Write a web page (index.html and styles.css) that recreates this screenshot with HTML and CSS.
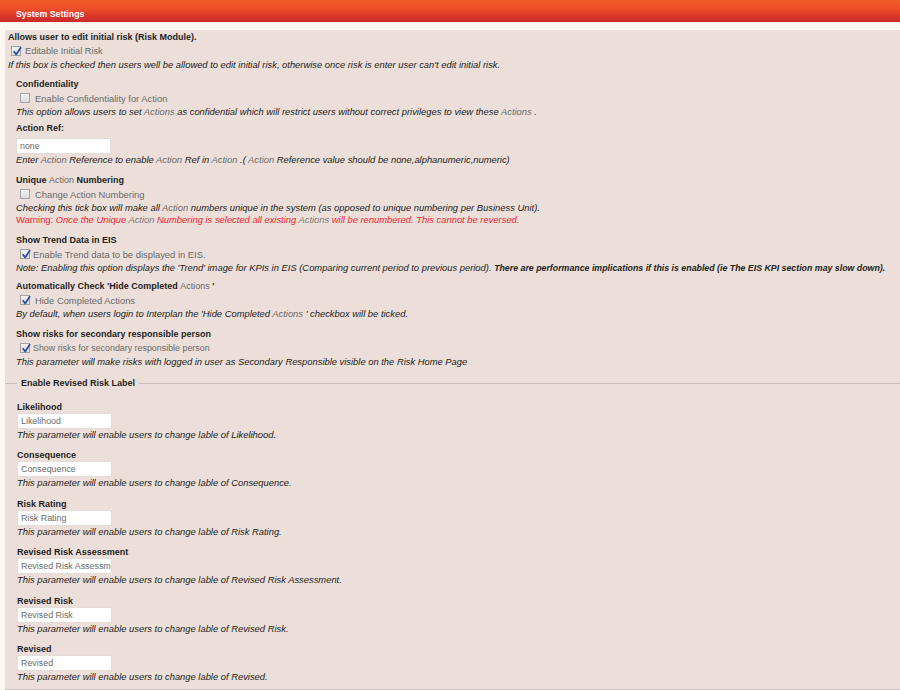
FILE: index.html
```html
<!DOCTYPE html>
<html>
<head>
<meta charset="utf-8">
<title>System Settings</title>
<link rel="stylesheet" href="styles.css">
</head>
<body>
<div class="header"><span class="title">System Settings</span></div>
<div class="panel">
  <div class="setting top">
    <div class="heading">Allows user to edit initial risk (Risk Module).</div>
    <label class="cb-row first"><span class="cb checked"><svg viewBox="0 0 10 10"><path d="M2.2 5.2 L4.2 8 L8.6 1.2"/></svg></span><span class="cb-label">Editable Initial Risk</span></label>
    <div class="desc">If this box is checked then users well be allowed to edit initial risk, otherwise once risk is enter user can't edit initial risk.</div>
  </div>

  <div class="sections">
    <div class="setting">
      <div class="heading">Confidentiality</div>
      <label class="cb-row"><span class="cb"></span><span class="cb-label">Enable Confidentiality for Action</span></label>
      <div class="desc">This option allows users to set <span class="term">Actions</span> as confidential which will restrict users without correct privileges to view these <span class="term">Actions</span> .</div>
    </div>

    <div class="setting ref">
      <div class="heading">Action Ref:</div>
      <input class="text-input" type="text" value="none">
      <div class="desc">Enter <span class="term">Action</span> Reference to enable <span class="term">Action</span> Ref in <span class="term">Action</span> .( <span class="term">Action</span> Reference value should be none,alphanumeric,numeric)</div>
    </div>

    <div class="setting">
      <div class="heading">Unique <span class="term-h">Action</span> Numbering</div>
      <label class="cb-row"><span class="cb"></span><span class="cb-label">Change Action Numbering</span></label>
      <div class="desc">Checking this tick box will make all <span class="term">Action</span> numbers unique in the system (as opposed to unique numbering per Business Unit).</div>
      <div class="warning"><span class="warn-lead">Warning:</span> Once the Unique <span class="term">Action</span> Numbering is selected all existing <span class="term">Actions</span> will be renumbered. This cannot be reversed.</div>
    </div>

    <div class="setting">
      <div class="heading">Show Trend Data in EIS</div>
      <label class="cb-row"><span class="cb checked"><svg viewBox="0 0 10 10"><path d="M2.2 5.2 L4.2 8 L8.6 1.2"/></svg></span><span class="cb-label tight">Enable Trend data to be displayed in EIS.</span></label>
      <div class="desc">Note: Enabling this option displays the 'Trend' image for KPIs in EIS (Comparing current period to previous period). <b>There are performance implications if this is enabled (ie The EIS KPI section may slow down).</b></div>
    </div>

    <div class="setting auto">
      <div class="heading">Automatically Check 'Hide Completed <span class="term-h">Actions</span> '</div>
      <label class="cb-row"><span class="cb checked"><svg viewBox="0 0 10 10"><path d="M2.2 5.2 L4.2 8 L8.6 1.2"/></svg></span><span class="cb-label">Hide Completed Actions</span></label>
      <div class="desc">By default, when users login to Interplan the 'Hide Completed <span class="term">Actions</span> ' checkbox will be ticked.</div>
    </div>

    <div class="setting">
      <div class="heading">Show risks for secondary responsible person</div>
      <label class="cb-row"><span class="cb checked"><svg viewBox="0 0 10 10"><path d="M2.2 5.2 L4.2 8 L8.6 1.2"/></svg></span><span class="cb-label small tight">Show risks for secondary responsible person</span></label>
      <div class="desc">This parameter will make risks with logged in user as Secondary Responsible visible on the Risk Home Page</div>
    </div>
  </div>

  <fieldset class="revised">
    <legend>Enable Revised Risk Label</legend>
    <div class="field">
      <div class="heading">Likelihood</div>
      <input class="text-input" type="text" value="Likelihood">
      <div class="desc">This parameter will enable users to change lable of Likelihood.</div>
    </div>
    <div class="field">
      <div class="heading">Consequence</div>
      <input class="text-input" type="text" value="Consequence">
      <div class="desc">This parameter will enable users to change lable of Consequence.</div>
    </div>
    <div class="field">
      <div class="heading">Risk Rating</div>
      <input class="text-input" type="text" value="Risk Rating">
      <div class="desc">This parameter will enable users to change lable of Risk Rating.</div>
    </div>
    <div class="field">
      <div class="heading">Revised Risk Assessment</div>
      <input class="text-input" type="text" value="Revised Risk Assessment">
      <div class="desc">This parameter will enable users to change lable of Revised Risk Assessment.</div>
    </div>
    <div class="field">
      <div class="heading">Revised Risk</div>
      <input class="text-input" type="text" value="Revised Risk">
      <div class="desc">This parameter will enable users to change lable of Revised Risk.</div>
    </div>
    <div class="field">
      <div class="heading">Revised</div>
      <input class="text-input" type="text" value="Revised">
      <div class="desc">This parameter will enable users to change lable of Revised.</div>
    </div>
  </fieldset>
</div>
</body>
</html>
```
FILE: styles.css
```css
html, body {
  margin: 0;
  padding: 0;
}
body {
  background: #fdf7f1;
  font-family: "Liberation Sans", Arial, sans-serif;
  color: #1e1e1e;
  width: 900px;
  height: 690px;
  overflow: hidden;
}
.header {
  height: 22px;
  box-sizing: border-box;
  background: linear-gradient(to bottom, #f25e29 0%, #ec4f29 40%, #d8362b 75%, #c92a2b 100%);
  display: flex;
  align-items: center;
  padding: 5px 0 0 16px;
  margin-bottom: 8px;
}
.title {
  color: #ffffff;
  font-weight: bold;
  font-size: 8.8px;
}
.panel {
  margin-left: 5px;
  background: #ecdfd9;
  border-bottom: 2px solid #cdc6c4;
  padding-top: 1px;
  padding-bottom: 6px;
}
.setting.top {
  padding-left: 3px;
}
.sections {
  padding-left: 11px;
  padding-top: 7px;
}
.heading {
  font-size: 9px;
  font-weight: bold;
  line-height: 12px;
  white-space: nowrap;
  color: #1e1e1e;
}
.term-h {
  font-weight: normal;
  color: #666;
}
.cb-row {
  display: flex;
  align-items: center;
  height: 16px;
  padding-left: 4px;
}
.cb-row.first {
  padding-left: 3px;
}
.cb {
  width: 10px;
  height: 10px;
  box-sizing: border-box;
  border: 1px solid #a3a3a3;
  background: linear-gradient(to bottom, #f4f4f4, #dcdcdc);
  flex: none;
  position: relative;
}
.cb svg {
  position: absolute;
  left: -0.5px;
  top: -1.5px;
  width: 10px;
  height: 11px;
  overflow: visible;
}
.cb svg path {
  fill: none;
  stroke: #2f4f9f;
  stroke-width: 1.8;
  stroke-linecap: round;
  stroke-linejoin: round;
}
.cb-label {
  margin-left: 5px;
  font-size: 9.4px;
  color: #6a6a6a;
  white-space: nowrap;
}
.cb-row.first .cb-label {
  margin-left: 4px;
  font-size: 9.2px;
}
.cb-label.tight {
  margin-left: 3px;
}
.cb-label.small {
  font-size: 8.9px;
}
.desc {
  font-size: 9.4px;
  font-style: italic;
  line-height: 12px;
  white-space: nowrap;
  color: #222;
}
.desc b {
  font-weight: bold;
  font-size: 8.8px;
}
.term {
  color: #6b6b6b;
}
.warning {
  font-size: 9.4px;
  font-style: italic;
  line-height: 12px;
  white-space: nowrap;
  color: #f0262b;
}
.warn-lead {
  font-style: normal;
}
.warning .term {
  color: #7a7a7a;
}
.setting + .setting {
  margin-top: 8px;
}
.sections .setting.ref {
  margin-top: 4px;
}
.sections .setting.auto {
  margin-top: 6px;
}
.text-input {
  display: block;
  box-sizing: border-box;
  width: 95px;
  height: 16px;
  margin: 4px 0 0 0;
  padding: 0 0 0 3px;
  border: 1px solid #e4dcd8;
  background: #ffffff;
  font-family: "Liberation Sans", Arial, sans-serif;
  font-size: 8.9px;
  color: #6a6a6a;
  outline: none;
}
.revised {
  margin: 9px 0 0 0;
  padding: 12px 0 0 12px;
  border: 0;
  border-top: 1px solid #c9bfba;
  min-width: 0;
}
.revised legend {
  font-size: 9px;
  font-weight: bold;
  line-height: 12px;
  padding: 0 4px;
  color: #1e1e1e;
}
.field .text-input {
  margin-top: 0;
}
.field + .field {
  margin-top: 8.4px;
}
```
